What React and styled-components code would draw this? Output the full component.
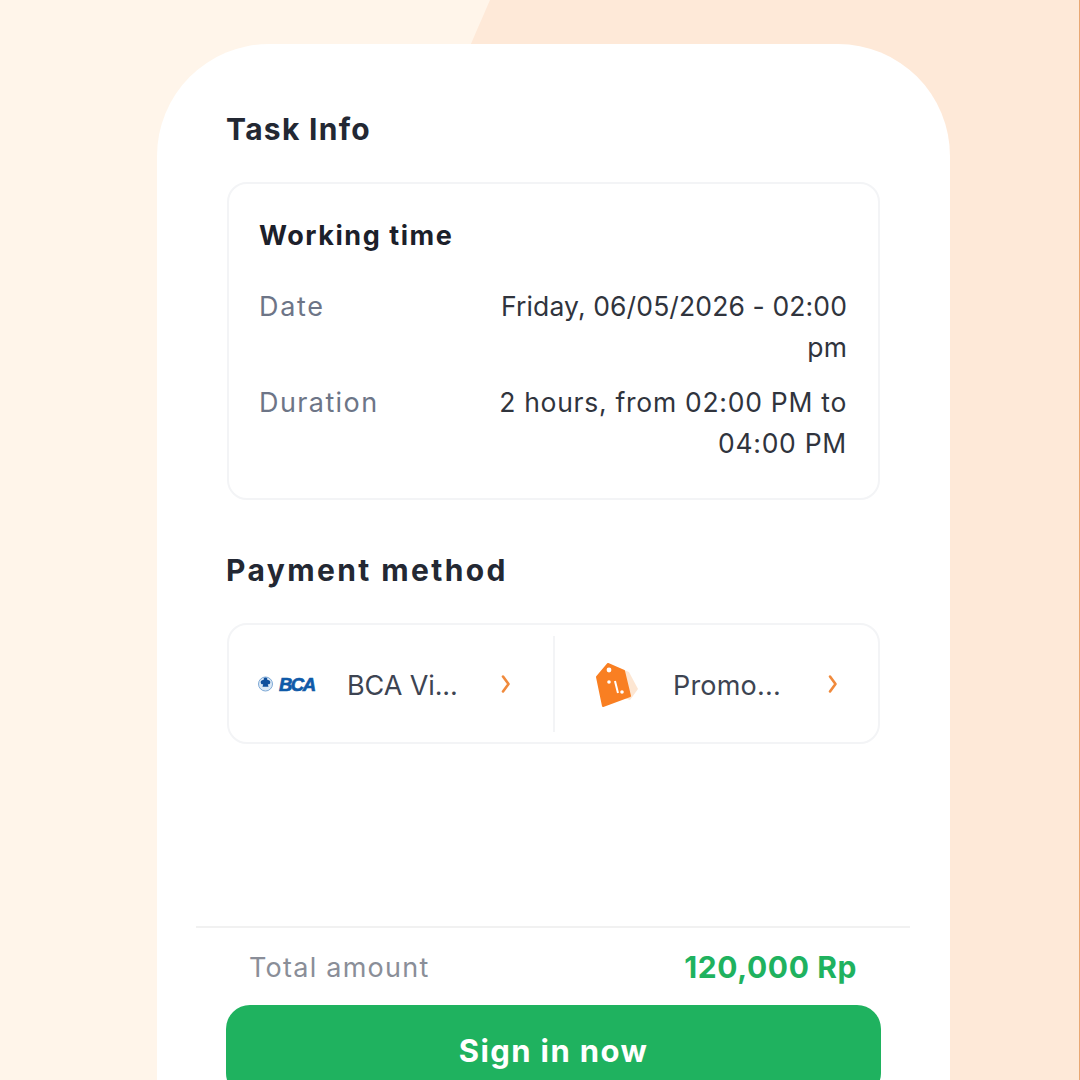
import React from "react";
import styled, { createGlobalStyle } from "styled-components";

const GlobalStyle = createGlobalStyle`
	html, body {
		margin: 0;
		padding: 0;
		background: #fff5ea;
		font-family: Inter, "Open Sans", "Liberation Sans", sans-serif;
	}
`;

const Page = styled.div`
	position: relative;
	width: 1080px;
	height: 1080px;
	overflow: hidden;
	background: #fff5ea;
	padding: 44px 0 0 157px;
	box-sizing: border-box;
`;

const BackShape = styled.div`
	position: absolute;
	top: 0;
	bottom: 0;
	left: 470px;
	right: 0;
	background: #fee9d8;
	border-right: 1px solid #e9a873;
	clip-path: polygon(20px 0, 100% 0, 100% 100%, 0 100%, 0 46px);
`;

const Sheet = styled.div`
	position: relative;
	width: 793px;
	height: 1100px;
	background: #fff;
	border-radius: 112px 112px 0 0;
	padding: 64px 70px 0;
	box-sizing: border-box;
	display: flex;
	flex-direction: column;
`;

const Heading = styled.h2`
	margin: 0 0 0 -1px;
	font-size: 30px;
	line-height: 42px;
	font-weight: 700;
	color: #232833;
	letter-spacing: ${(p) => p.$spacing}px;
`;

const Card = styled.div`
	width: 653px;
	box-sizing: border-box;
	background: #fff;
	border: 2px solid #f3f4f6;
	border-radius: 20px;
`;

const TimeCard = styled(Card)`
	height: 318px;
	margin: 32px 0 49px;
	padding: 33px 31px 0 30px;
`;

const CardTitle = styled.h3`
	margin: 0 0 31px;
	font-size: 27px;
	line-height: 38px;
	font-weight: 700;
	color: #1c202a;
	letter-spacing: 1.55px;
`;

const InfoRow = styled.div`
	display: flex;
	justify-content: space-between;
	align-items: flex-start;
	margin-bottom: 14px;
`;

const InfoLabel = styled.span`
	font-size: 27px;
	line-height: 41px;
	color: #6d7587;
	letter-spacing: ${(p) => p.$spacing}px;
`;

const InfoValue = styled.span`
	width: 380px;
	font-size: 26.5px;
	line-height: 41px;
	text-align: right;
	color: #30343d;
	letter-spacing: ${(p) => p.$spacing}px;
`;

const PayCard = styled(Card)`
	height: 121px;
	margin-top: 32px;
	display: flex;
	align-items: center;
`;

const PayCell = styled.div`
	flex: ${(p) => (p.$divided ? "1" : "0 0 324px")};
	height: 96px;
	display: flex;
	align-items: center;
	box-sizing: border-box;
	padding: 0 ${(p) => p.$right}px 0 ${(p) => p.$left}px;
	border-left: ${(p) => (p.$divided ? "2px solid #f3f4f6" : "none")};
`;

const PayIcon = styled.div`
	width: ${(p) => p.$width}px;
	flex: none;
	display: flex;
	align-items: center;
`;

const PayLabel = styled.span`
	flex: 1;
	font-size: 27px;
	line-height: 40px;
	color: #3d4452;
	white-space: nowrap;
	letter-spacing: ${(p) => p.$spacing}px;
	padding-top: 4px;
`;

const Chevron = styled.svg`
	width: 12px;
	height: 20px;
	flex: none;
	fill: none;
	stroke: #f08a3c;
	stroke-width: 2.6;
	stroke-linecap: round;
	stroke-linejoin: round;
`;

const BottomBar = styled.div`
	position: absolute;
	left: 39px;
	right: 40px;
	top: 882px;
	border-top: 2.5px solid #f1f1f1;
`;

const TotalRow = styled.div`
	display: flex;
	justify-content: space-between;
	align-items: center;
	height: 77px;
	padding: 0 53px;
`;

const TotalLabel = styled.span`
	font-size: 27px;
	color: #8a8e98;
	letter-spacing: 1.25px;
	padding-top: 2px;
`;

const TotalValue = styled.span`
	font-size: 30px;
	font-weight: 700;
	color: #1fb25f;
	letter-spacing: 0.6px;
`;

const SignInButton = styled.button`
	display: block;
	width: 655px;
	height: 92px;
	margin: 0 auto 0 30px;
	border: none;
	border-radius: 24px;
	background: #1fb25f;
	color: #fff;
	font-family: inherit;
	font-size: 31px;
	font-weight: 700;
	letter-spacing: 1.4px;
	padding: 0 0 2px;
`;

const BcaLogo = () => (
	<svg width="60" height="22" viewBox="0 0 60 22">
		<circle cx="7.500" cy="11" r="7" fill="#dbe8f5" stroke="#7ea9d6" strokeWidth="1" />
		<path d="M7.500 4.500c1.400 0 2.200 1.200 1.800 2.600 1.600-.4 3.200.6 3 2.300-.1 1.400-1.300 2.200-2.500 1.900l.7 2.500H4.500l.7-2.500c-1.200.3-2.400-.5-2.500-1.900-.2-1.700 1.400-2.700 3-2.300-.4-1.400.4-2.600 1.800-2.600z" fill="#0f4f9c" />
		<text x="21" y="17.500" fontFamily="Liberation Sans, sans-serif" fontSize="18.500" fontWeight="700" fontStyle="italic" fill="#0f5aa8" stroke="#0f5aa8" strokeWidth="0.7" textLength="37">BCA</text>
	</svg>
);

const PromoTag = () => (
	<svg width="50" height="50" viewBox="0 0 50 50">
		<path d="M24 7l15 6 9 17-8 11-12-4z" fill="#fde6d2" />
		<path d="M18 5l16 7 6 25-27 10-6-29z" fill="#f97f22" stroke="#f97f22" strokeWidth="2" strokeLinejoin="round" />
		<circle cx="19" cy="11" r="2.400" fill="#fff" />
		<circle cx="19" cy="23" r="1.800" fill="#fff" />
		<path d="M25 22l3 12" stroke="#fff" strokeWidth="2" />
		<circle cx="32" cy="33" r="1.800" fill="#fff" />
	</svg>
);

const ChevronRight = () => (
	<Chevron viewBox="0 0 12 20">
		<path d="M3 2.500l5.500 7.500-5.500 7.500" />
	</Chevron>
);

export default function App() {
	return (
		<Page>
			<GlobalStyle />
			<BackShape />
			<Sheet>
				<Heading $spacing={1.3}>Task Info</Heading>
				<TimeCard>
					<CardTitle>Working time</CardTitle>
					<InfoRow>
						<InfoLabel $spacing={1.7}>Date</InfoLabel>
						<InfoValue $spacing={0.12}>Friday, 06/05/2026 - 02:00 pm</InfoValue>
					</InfoRow>
					<InfoRow>
						<InfoLabel $spacing={1.4}>Duration</InfoLabel>
						<InfoValue $spacing={0.72}>2 hours, from 02:00 PM to 04:00 PM</InfoValue>
					</InfoRow>
				</TimeCard>
				<Heading $spacing={2.4}>Payment method</Heading>
				<PayCard>
					<PayCell $left={29} $right={41}>
						<PayIcon $width={89}><BcaLogo /></PayIcon>
						<PayLabel $spacing={-0.1}>BCA Vi...</PayLabel>
						<ChevronRight />
					</PayCell>
					<PayCell $left={35} $right={39} $divided>
						<PayIcon $width={83}><PromoTag /></PayIcon>
						<PayLabel $spacing={0.2}>Promo...</PayLabel>
						<ChevronRight />
					</PayCell>
				</PayCard>
				<BottomBar>
					<TotalRow>
						<TotalLabel>Total amount</TotalLabel>
						<TotalValue>120,000 Rp</TotalValue>
					</TotalRow>
					<SignInButton>Sign in now</SignInButton>
				</BottomBar>
			</Sheet>
		</Page>
	);
}
